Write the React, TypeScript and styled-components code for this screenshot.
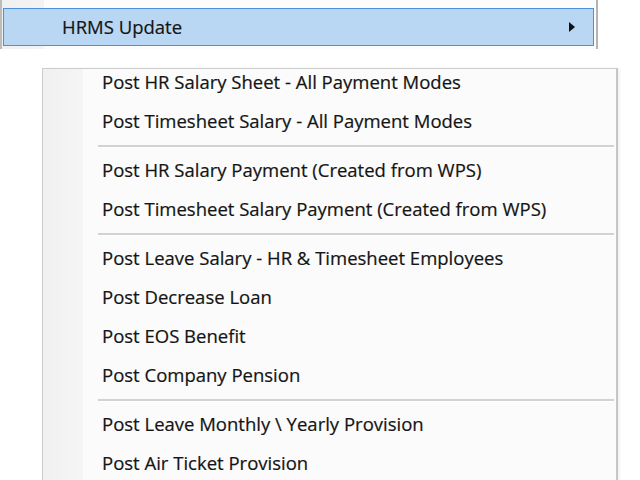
import React from 'react';
import styled, { createGlobalStyle } from 'styled-components';

const GlobalStyle = createGlobalStyle`
  html, body {
    margin: 0;
    padding: 0;
    background: #ffffff;
  }
  body {
    font-family: 'Open Sans', 'Noto Sans', sans-serif;
  }
`;

const Page = styled.div`
  width: 640px;
  height: 480px;
  overflow: hidden;
  display: flex;
  flex-direction: column;
`;

const ParentMenu = styled.div`
  width: 598px;
  height: 49px;
  border-left: 2px solid #bcbcbc;
  border-right: 2px solid #b4b4b4;
  background: linear-gradient(to right, #f1f1f1 0, #f3f3f3 42px, #fcfcfc 42px);
  padding-top: 8px;
  padding-left: 1px;
  box-sizing: border-box;
`;

const ActiveItem = styled.div`
  width: 591px;
  height: 38px;
  box-sizing: border-box;
  border: 1px solid #4a93dc;
  background: #b9d7f3;
  display: flex;
  align-items: center;
  padding-left: 58px;
  padding-right: 18px;
  padding-bottom: 2px;
  font-size: 18.5px;
  color: #141414;
  -webkit-text-stroke: 0.2px #141414;
`;

const ItemLabel = styled.span`
  flex: 1;
`;

const Arrow = styled.span`
  width: 0;
  height: 0;
  margin-top: 2px;
  border-top: 5px solid transparent;
  border-bottom: 5px solid transparent;
  border-left: 6px solid #111;
`;

const SubMenu = styled.div`
  margin-top: 19px;
  margin-left: 42px;
  width: 576px;
  flex: 1;
  box-sizing: border-box;
  border: 1px solid #cccccc;
  border-right: 2px solid #c6c6c6;
  border-bottom: none;
  background: linear-gradient(to right, #f0f0f0 0, #f5f5f5 40px, #fbfbfb 40px);
  overflow: hidden;
  box-shadow: 2px 0 2px rgba(0, 0, 0, 0.05);
`;

const List = styled.div`
  margin-top: -6px;
  display: flex;
  flex-direction: column;
`;

const Row = styled.div`
  height: 39px;
  box-sizing: border-box;
  display: flex;
  align-items: center;
  padding-left: 59px;
  padding-bottom: 3px;
  font-size: 18.5px;
  color: #141414;
  -webkit-text-stroke: 0.2px #141414;
  white-space: nowrap;
`;

const Separator = styled.div`
  height: 10px;
  display: flex;
  align-items: center;
  padding-left: 55px;
  padding-right: 2px;

  &::before {
    content: '';
    flex: 1;
    height: 2px;
    background: #d2d2d2;
    border-bottom: 1px solid #ffffff;
  }
`;

const groups: string[][] = [
  ['Post HR Salary Sheet - All Payment Modes', 'Post Timesheet Salary - All Payment Modes'],
  ['Post HR Salary Payment (Created from WPS)', 'Post Timesheet Salary Payment (Created from WPS)'],
  [
    'Post Leave Salary - HR & Timesheet Employees',
    'Post Decrease Loan',
    'Post EOS Benefit',
    'Post Company Pension',
  ],
  ['Post Leave Monthly \\ Yearly Provision', 'Post Air Ticket Provision'],
];

export default function App() {
  return (
    <Page>
      <GlobalStyle />
      <ParentMenu>
        <ActiveItem>
          <ItemLabel>HRMS Update</ItemLabel>
          <Arrow />
        </ActiveItem>
      </ParentMenu>
      <SubMenu>
        <List>
          {groups.map((group, gi) => (
            <React.Fragment key={gi}>
              {gi > 0 && <Separator />}
              {group.map((label) => (
                <Row key={label}>{label}</Row>
              ))}
            </React.Fragment>
          ))}
        </List>
      </SubMenu>
    </Page>
  );
}
